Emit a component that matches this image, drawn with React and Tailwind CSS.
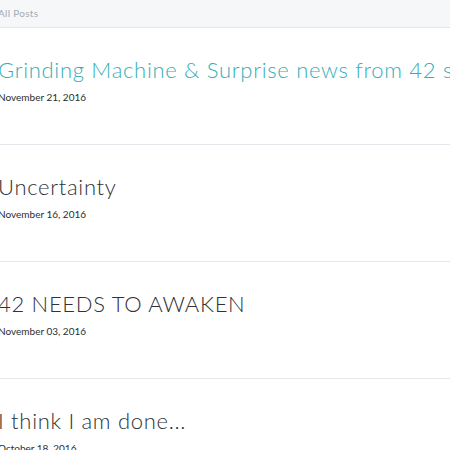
export default function App() {
  const posts = [
    { title: "Grinding Machine & Surprise news from 42 studio", date: "November 21, 2016", active: true },
    { title: "Uncertainty", date: "November 16, 2016" },
    { title: "42 NEEDS TO AWAKEN", date: "November 03, 2016" },
    { title: "I think I am done...", date: "October 18, 2016" },
  ];
  return (
    <div className="w-[450px] h-[450px] overflow-hidden bg-white" style={{ fontFamily: "'Lato', 'Open Sans', sans-serif" }}>
      <div className="h-[28px] bg-[#f6f7f9] border-b border-[#e3e6ea] flex items-center">
        <span className="-ml-[2px] text-[10px] text-[#a3abb3] tracking-[0.3px]">All Posts</span>
      </div>
      {posts.map((p, i) => (
        <div key={i} className="h-[117px] border-b border-[#e3e6ea] pt-[29px] whitespace-nowrap">
          <div className={`-ml-[2px] text-[22px] leading-[26px] font-light tracking-[0.7px] ${p.active ? "text-[#36aeb8]" : "text-[#2f3237]"}`}>
            {p.title}
          </div>
          <div className="-ml-[2px] mt-[8px] text-[10px] leading-[13px] text-[#2a2d30]">{p.date}</div>
        </div>
      ))}
    </div>
  );
}
